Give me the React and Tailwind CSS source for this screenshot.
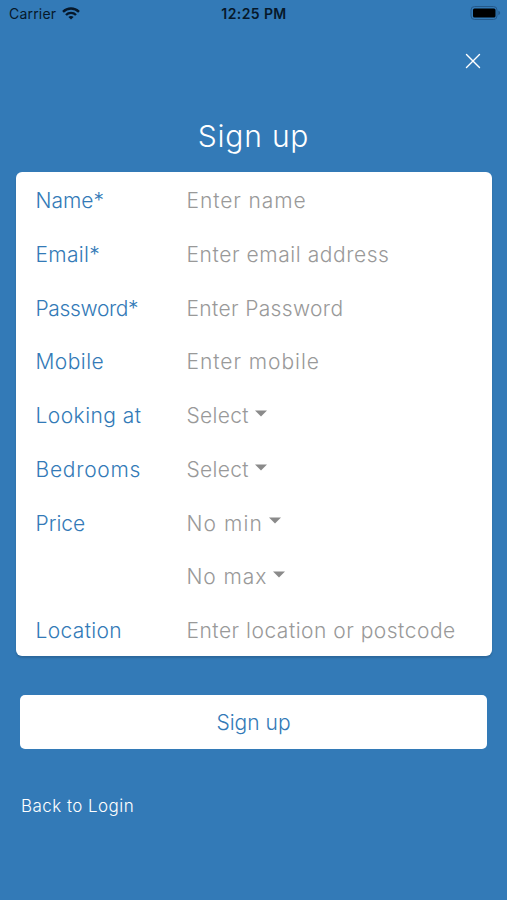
import { X } from 'lucide-react';

const fields = [
  { label: 'Name*', labelClass: '', hint: 'Enter name', hintClass: 'placeholder:tracking-[0.9px]' },
  { label: 'Email*', labelClass: 'tracking-[0.3px]', hint: 'Enter email address', hintClass: 'placeholder:tracking-[0.57px]' },
  { label: 'Password*', labelClass: 'tracking-[-0.35px]', hint: 'Enter Password', hintClass: 'placeholder:tracking-[0.35px]' },
  { label: 'Mobile', labelClass: 'tracking-[0.45px]', hint: 'Enter mobile', hintClass: 'placeholder:tracking-[0.95px]' },
  { label: 'Looking at', labelClass: 'tracking-[0.45px]', select: 'Select', hintClass: 'tracking-[0.3px]' },
  { label: 'Bedrooms', labelClass: 'tracking-[0.75px]', select: 'Select', hintClass: 'tracking-[0.3px]' },
  { label: 'Price', labelClass: '', select: 'No min', hintClass: 'tracking-[1.1px]' },
  { label: '', labelClass: '', select: 'No max', hintClass: 'tracking-[0.9px]' },
  { label: 'Location', labelClass: 'tracking-[0.35px]', hint: 'Enter location or postcode', hintClass: 'placeholder:tracking-[0.5px]' },
];

function StatusBar() {
  return (
    <header className="grid h-[26px] grid-cols-3 items-center pl-[9px] pr-[6px] text-[#06182a]">
      <div className="flex items-center gap-[6px]">
        <span className="text-[14px] tracking-[0.2px]">Carrier</span>
        <svg width="18" height="13" viewBox="0 0 18 13" fill="none" stroke="currentColor" strokeWidth="2.4">
          <path d="M1 4.8C5.5 0.4 12.5 0.4 17 4.8" />
          <path d="M4 8C6.8 5.2 11.2 5.2 14 8" />
          <path d="M9 12.6L6.4 10C7.8 8.7 10.2 8.7 11.6 10Z" fill="currentColor" stroke="none" />
        </svg>
      </div>
      <span className="-ml-[2px] text-center text-[14px] font-semibold tracking-[0.4px]">12:25 PM</span>
      <svg className="justify-self-end" width="31" height="14" viewBox="0 0 31 14">
        <rect x="1" y="0.5" width="26" height="13" rx="3.5" fill="none" stroke="#24598a" />
        <rect x="3" y="2.5" width="22.5" height="9" rx="1.5" fill="#000" />
        <path d="M28.3 4.8C30.7 5.4 30.7 8.6 28.3 9.2Z" fill="#24598a" />
      </svg>
    </header>
  );
}

function SelectBox({ value, className }) {
  return (
    <button type="button" className="flex items-center gap-[6px] text-[#999]">
      <span className={className}>{value}</span>
      <svg className="mb-[5px]" width="12" height="7" viewBox="0 0 12 7" fill="#8a8a8a">
        <path d="M0 0.5H12L6 6.5Z" />
      </svg>
    </button>
  );
}

export default function App() {
  return (
    <div className="flex h-[900px] w-full flex-col overflow-hidden bg-[#337ab7] font-['Inter',sans-serif]">
      <StatusBar />

      <div className="flex justify-end pr-[21px] pt-[22px]">
        <button type="button" aria-label="Close">
          <X className="h-[26px] w-[26px] text-white" strokeWidth={1.3} />
        </button>
      </div>

      <h1 className="mt-[42px] text-center text-[30px] font-light leading-10 tracking-[0.8px] text-white">Sign up</h1>

      <form className="flex flex-1 flex-col text-[21px] font-light">
        <div className="ml-[15.5px] mr-[15px] mt-4 grid h-[484px] auto-rows-[53.75px] rounded-md bg-white pl-5 pt-[2px] shadow-[0_2px_2px_rgba(0,0,0,0.15)]">
          {fields.map((field, i) => (
            <div key={i} className="flex items-center">
              <label className={`w-[151px] shrink-0 text-[#337ab7] ${field.labelClass}`}>{field.label}</label>
              {field.select ? (
                <SelectBox value={field.select} className={field.hintClass} />
              ) : (
                <input
                  aria-label={field.label}
                  placeholder={field.hint}
                  className={`min-w-0 flex-1 bg-transparent outline-none placeholder:text-[#999] ${field.hintClass}`}
                />
              )}
            </div>
          ))}
        </div>

        <button type="button" className="mx-5 mt-[39px] h-[54px] rounded-[5px] bg-white pt-px text-[#337ab7]">
          Sign up
        </button>

        <a href="#" className="ml-[21px] mt-[45px] self-start text-[17px] leading-6 tracking-[0.45px] text-white">
          Back to Login
        </a>
      </form>
    </div>
  );
}
